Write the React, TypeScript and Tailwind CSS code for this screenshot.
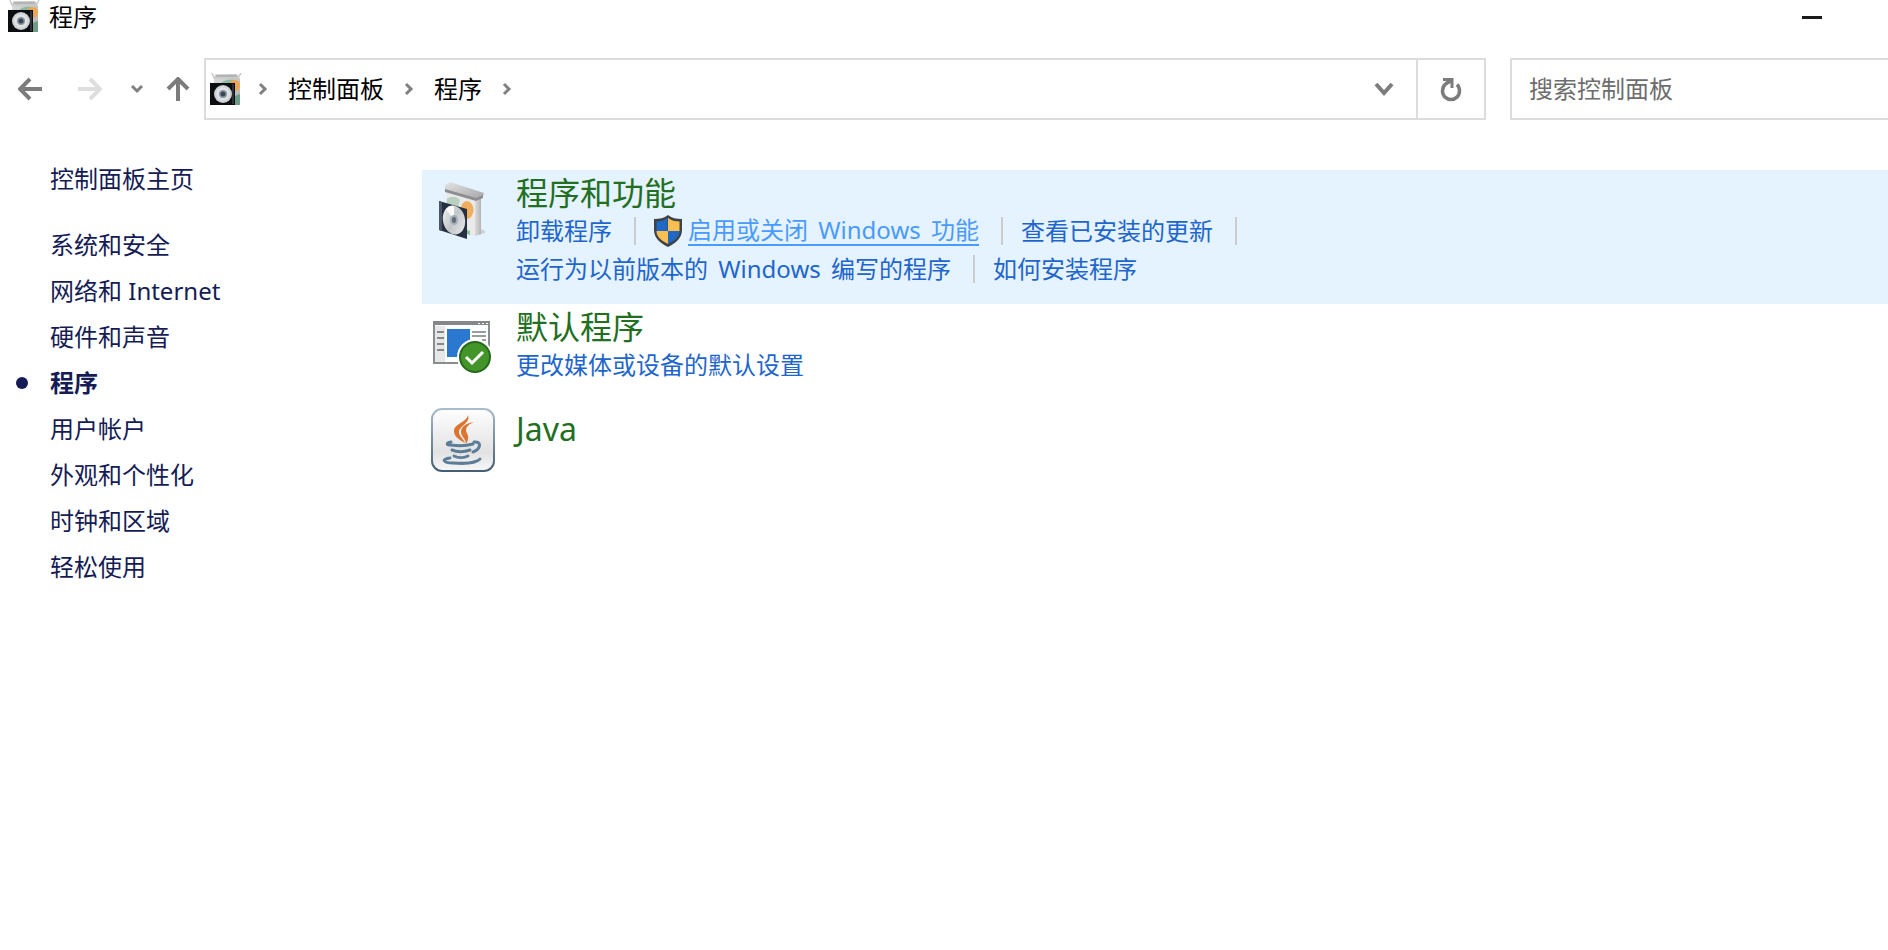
import React from "react";

type NavItem = { id: number; name: string; active?: boolean };
type TaskLink = { id: string; name: React.ReactNode; shield?: boolean; hovered?: boolean; divider?: boolean };
type Category = {
  id: number;
  title: string;
  icon: React.ReactNode;
  iconClass: string;
  rows: TaskLink[][];
  className: string;
};

function BoxIcon() {
  return (
    <svg viewBox="0 0 32 32" className="w-8 h-8 shrink-0" aria-hidden="true">
      <defs>
        <linearGradient id="boxFace" x1="0" y1="0" x2="1" y2="1">
          <stop offset="0" stopColor="#dcdcdc" />
          <stop offset="1" stopColor="#aeb2b2" />
        </linearGradient>
        <radialGradient id="disc">
          <stop offset="0" stopColor="#aeb6be" />
          <stop offset="0.6" stopColor="#e4e6e8" />
          <stop offset="1" stopColor="#c2c6ca" />
        </radialGradient>
      </defs>
      <path d="M5 1h22l3 5v26H4V6z" fill="url(#boxFace)" />
      <path d="M2 0l2 5h24l3-5" fill="none" stroke="#c9c9c9" strokeWidth="1.5" />
      <path d="M6 2h20l1 2H5z" fill="#b3b3b3" />
      <path d="M10 11c3-4 9-5 14-4l-2 4z" fill="#8fb8a0" />
      <circle cx="24.500" cy="12.500" r="5.500" fill="#eea750" />
      <path d="M25 23l5-2v11h-5z" fill="#6f9c85" />
      <path d="M0 10h25v22H0z" fill="#0c0d10" />
      <path d="M22 11h2v20h-2z" fill="#2d3036" />
      <circle cx="13" cy="21" r="9" fill="url(#disc)" />
      <circle cx="13" cy="21" r="4" fill="#8e99a5" />
      <circle cx="13" cy="21" r="2.500" fill="#3b4654" />
    </svg>
  );
}

function ProgramsIcon() {
  return (
    <svg viewBox="0 0 48 58" className="w-12 h-[58px]" aria-hidden="true">
      <defs>
        <linearGradient id="side" x1="0" y1="0" x2="1" y2="0">
          <stop offset="0" stopColor="#dcdcdc" />
          <stop offset="1" stopColor="#b4b4b4" />
        </linearGradient>
        <linearGradient id="lid" x1="0" y1="0" x2="1" y2="1">
          <stop offset="0" stopColor="#e4e4e4" />
          <stop offset="1" stopColor="#a5a5a8" />
        </linearGradient>
        <linearGradient id="cd" x1="0" y1="0" x2="1" y2="1">
          <stop offset="0" stopColor="#f2f3f3" />
          <stop offset="0.5" stopColor="#c3c7ca" />
          <stop offset="1" stopColor="#eceded" />
        </linearGradient>
      </defs>
      <path d="M34 54l9-2 4-2-4-3z" fill="#c9d3dc" />
      <path d="M7 9l29 8v37L7 46z" fill="#e9eaea" />
      <path d="M36 17l6-2v37l-6 2z" fill="url(#side)" />
      <path d="M8 17c3-3 10-3 13 1l-2 7-11-3z" fill="#b9cfc0" />
      <ellipse cx="28" cy="28" rx="6.500" ry="9" fill="#f0ae5e" />
      <path d="M28 48l3 1v4l-3-1z" fill="#8fc09c" />
      <path d="M6 3l5-3 34 11-1 3-7 3L6 8z" fill="url(#lid)" />
      <path d="M6 7l31 9 7-3v3l-7 3L6 10z" fill="#8e8e92" />
      <path d="M0 19l28 8v30L0 48z" fill="#26303e" />
      <path d="M0 19l3 1v29l-3-1z" fill="#49566a" />
      <ellipse cx="15" cy="38" rx="11" ry="14.500" transform="rotate(-12 15 38)" fill="url(#cd)" />
      <path d="M15 38L7 27c2-3 5-4 8-3z" fill="#fafafa" />
      <ellipse cx="15" cy="38" rx="4" ry="5" fill="#a4adb6" />
      <ellipse cx="15" cy="38" rx="2" ry="3" fill="#5e6b79" />
    </svg>
  );
}

function DefaultsIcon() {
  return (
    <svg viewBox="0 0 60 54" className="w-[60px] h-[54px]" aria-hidden="true">
      <path d="M1 1h55v41H1z" fill="#fff" stroke="#8a8d90" strokeWidth="2" />
      <path d="M0 0h57v4H0z" fill="#85888b" />
      <path d="M45 2h2v1h-2zM49 2h2v1h-2zM53 2h2v1h-2z" fill="#fff" />
      <path d="M2 5h10v36H2z" fill="#e7e7e7" />
      <path d="M4 11h7M4 17h7M4 23h7M4 29h7" stroke="#85888b" strokeWidth="2" />
      <path d="M14 8h23v28H14z" fill="#2b78d0" />
      <path d="M39 11h14M39 15h14M49 19h4" stroke="#9a9da0" strokeWidth="2" />
      <circle cx="42" cy="36" r="18" fill="#fff" />
      <circle cx="42" cy="36" r="15" fill="#43952a" stroke="#256a1c" strokeWidth="2" />
      <path d="M33 36l6 6 11-11" fill="none" stroke="#fff" strokeWidth="3" />
    </svg>
  );
}

function JavaIcon() {
  return (
    <svg viewBox="0 0 64 64" className="w-16 h-16" aria-hidden="true">
      <defs>
        <linearGradient id="tile" x1="0" y1="0" x2="0" y2="1">
          <stop offset="0" stopColor="#fefefe" />
          <stop offset="0.7" stopColor="#e2e2e2" />
          <stop offset="1" stopColor="#f7f7f7" />
        </linearGradient>
        <linearGradient id="tileEdge" x1="0" y1="0" x2="0" y2="1">
          <stop offset="0" stopColor="#a9bccb" />
          <stop offset="1" stopColor="#455f74" />
        </linearGradient>
      </defs>
      <rect x="1" y="1" width="62" height="62" rx="10" fill="url(#tile)" stroke="url(#tileEdge)" strokeWidth="2" />
      <path d="M37 7c3 8-9 11-9 17 0 4 4 6 6 11-7-4-11-7-11-12 0-7 13-9 14-16z" fill="#dc7430" />
      <path d="M43 14c-5 2-8 5-8 8 0 4 5 6 0 14 0-5-5-8-5-12 0-6 6-9 13-10z" fill="#dc7430" />
      <g fill="none" stroke="#5b7d98" strokeWidth="3" strokeLinecap="round">
        <path d="M20 34c-5 1-5 3 0 3 7 1 15 1 22-1" />
        <path d="M43 34c8-1 7 7-1 10" />
        <path d="M21 42c5 2 12 2 18 0" />
        <path d="M23 48c4 2 10 2 14 0" />
        <path d="M19 50c-9 1-7 5 3 5 11 1 23 0 27-4" />
      </g>
    </svg>
  );
}

function ShieldIcon() {
  return (
    <svg viewBox="0 0 28 32" className="w-7 h-8 mr-1.5 shrink-0" aria-hidden="true">
      <path d="M14 0c4 3 8 4 14 4v11c0 8-6 13-14 17C6 28 0 23 0 15V4c6 0 10-1 14-4z" fill="#3f4347" />
      <path d="M13.500 3v13H2.500V6.500c4 0 8-1 11-3.500z" fill="#1f68c6" />
      <path d="M14 3c3 2.500 7 3.500 11.500 3.500V16H14z" fill="#fbbf51" />
      <path d="M2.500 16H14v13C8 26 2.500 22 2.500 16z" fill="#fbbf51" />
      <path d="M14 16h11.500c0 6-5.500 10-11.500 13z" fill="#1f68c6" />
    </svg>
  );
}

function Chevron() {
  return (
    <svg viewBox="0 0 10 14" className="w-2.5 h-3.5 shrink-0" aria-hidden="true">
      <path d="M2 2l5 5-5 5" fill="none" stroke="#808080" strokeWidth="3" />
    </svg>
  );
}

const navItems: NavItem[] = [
  { id: 1, name: "系统和安全" },
  { id: 2, name: "网络和 Internet" },
  { id: 3, name: "硬件和声音" },
  { id: 4, name: "程序", active: true },
  { id: 5, name: "用户帐户" },
  { id: 6, name: "外观和个性化" },
  { id: 7, name: "时钟和区域" },
  { id: 8, name: "轻松使用" },
];

// Latin words get a little air between the Chinese characters
const windows = <span className="mx-1">Windows</span>;

const categories: Category[] = [
  {
    id: 1,
    title: "程序和功能",
    icon: <ProgramsIcon />,
    iconClass: "pt-3",
    className: "bg-[#e5f2ff] pb-4",
    rows: [
      [
        { id: "uninstall", name: "卸载程序", divider: true },
        { id: "features", name: <>启用或关闭 {windows} 功能</>, shield: true, hovered: true, divider: true },
        { id: "updates", name: "查看已安装的更新", divider: true },
      ],
      [
        { id: "compat", name: <>运行为以前版本的 {windows} 编写的程序</>, divider: true },
        { id: "install", name: "如何安装程序" },
      ],
    ],
  },
  {
    id: 2,
    title: "默认程序",
    icon: <DefaultsIcon />,
    iconClass: "pt-[17px]",
    className: "pb-[22px]",
    rows: [[{ id: "media", name: "更改媒体或设备的默认设置" }]],
  },
  { id: 3, title: "Java", icon: <JavaIcon />, iconClass: "pt-0.5", className: "pb-4", rows: [] },
];

function TitleBar() {
  return (
    <header className="flex h-[34px] items-start pl-2">
      <BoxIcon />
      <h1 className="ml-[9px] flex-1 leading-[34px] text-black">程序</h1>
      <button type="button" aria-label="最小化" className="mr-[66px] h-[34px]">
        <span className="block h-[3px] w-5 bg-[#1a1a1a]" />
      </button>
    </header>
  );
}

function AddressRow() {
  return (
    <div className="mt-6 flex h-[62px] items-stretch">
      {/* History buttons */}
      <nav className="flex w-[204px] shrink-0 items-center pl-[18px]">
        <button type="button" aria-label="后退">
          <svg viewBox="0 0 24 24" className="w-6 h-6">
            <path d="M24 12H2M12 2L2 12l10 10" fill="none" stroke="#7c7c7c" strokeWidth="4" />
          </svg>
        </button>
        <button type="button" aria-label="前进" className="ml-9">
          <svg viewBox="0 0 24 24" className="w-6 h-6">
            <path d="M0 12h22M12 2l10 10-10 10" fill="none" stroke="#dedede" strokeWidth="4" />
          </svg>
        </button>
        <button type="button" aria-label="最近浏览的位置" className="ml-7">
          <svg viewBox="0 0 14 10" className="w-3.5 h-2.5">
            <path d="M2 2l5 5 5-5" fill="none" stroke="#808080" strokeWidth="3" />
          </svg>
        </button>
        <button type="button" aria-label="上移" className="ml-[22px]">
          <svg viewBox="0 0 24 24" className="w-6 h-6">
            <path d="M12 24V2M2 12L12 2l10 10" fill="none" stroke="#7c7c7c" strokeWidth="4" />
          </svg>
        </button>
      </nav>

      {/* Address bar */}
      <div className="flex flex-1 border-2 border-[#dcdcdc]">
        <div className="flex flex-1 items-center pl-1">
          <BoxIcon />
          <div className="ml-4 flex items-center">
            <Chevron />
            <a href="#panel" className="mx-5 leading-8 text-black">控制面板</a>
            <Chevron />
            <a href="#programs" className="mx-5 leading-8 text-black">程序</a>
            <Chevron />
          </div>
        </div>
        <button type="button" aria-label="以前的位置" className="w-16">
          <svg viewBox="0 0 20 14" className="mx-auto w-5 h-3.5">
            <path d="M2 2l8 9 8-9" fill="none" stroke="#7c7c7c" strokeWidth="4" />
          </svg>
        </button>
        <button type="button" aria-label="刷新" className="w-[68px] border-l-2 border-[#dcdcdc]">
          <svg viewBox="0 0 22 26" className="mx-auto w-[22px] h-[26px]">
            <path d="M11 5C5 7 2.500 10 2.500 15c0 5 4 8.500 8.500 8.500s8.500-3.500 8.500-8.500c0-3-1-5-2.500-6.500" fill="none" stroke="#7c7c7c" strokeWidth="3.500" />
            <path d="M3 3.500h9v8.500" fill="none" stroke="#7c7c7c" strokeWidth="3" />
          </svg>
        </button>
      </div>

      {/* Search box */}
      <input
        type="search"
        aria-label="搜索控制面板"
        placeholder="搜索控制面板"
        className="ml-6 w-[378px] appearance-none rounded-none border-2 border-r-0 border-[#dcdcdc] bg-white pl-[17px] placeholder-[#6d6d6d] outline-none"
      />
    </div>
  );
}

function Sidebar() {
  return (
    <aside className="w-[422px] shrink-0 pt-9 pl-4 leading-[46px] text-[#151c55]">
      <a href="#home" className="ml-[34px] block">控制面板主页</a>
      <ul className="mt-5">
        {navItems.map((item) => (
          <li key={item.id} className="flex items-center">
            <span className="w-[34px]">
              {item.active && <span className="block h-3 w-3 rounded-full bg-[#151c55]" />}
            </span>
            <a href={`#nav-${item.id}`} className={item.active ? "font-bold" : ""}>
              {item.name}
            </a>
          </li>
        ))}
      </ul>
    </aside>
  );
}

function CategorySection({ category }: { category: Category }) {
  return (
    <section className={`flex ${category.className}`}>
      <div className={`flex w-[94px] shrink-0 justify-center pr-3 ${category.iconClass}`}>
        {category.icon}
      </div>
      <div className="pt-1">
        <h2 className="text-[32px] leading-[38px] text-[#226f22]">
          <a href={`#category-${category.id}`}>{category.title}</a>
        </h2>
        {category.rows.map((row, i) => (
          <div key={i} className="flex h-[38px] items-center">
            {row.map((link) => (
              <React.Fragment key={link.id}>
                {link.shield && <ShieldIcon />}
                <a
                  href={`#${link.id}`}
                  className={
                    link.hovered
                      ? "border-b-2 border-[#4a9bff] leading-7 text-[#4a9bff]"
                      : "leading-7 text-[#1f66cc]"
                  }
                >
                  {link.name}
                </a>
                {link.divider && <span className="ml-[22px] mr-[18px] h-7 w-0.5 bg-[#cccccc]" />}
              </React.Fragment>
            ))}
          </div>
        ))}
      </div>
    </section>
  );
}

export default function App() {
  return (
    <div
      lang="zh-CN"
      className="min-h-screen bg-white font-['Noto_Sans','Noto_Sans_CJK_SC',sans-serif] text-2xl"
    >
      <TitleBar />
      <AddressRow />
      <div className="flex">
        <Sidebar />
        <main className="flex-1 pt-[50px]">
          {categories.map((category) => (
            <CategorySection key={category.id} category={category} />
          ))}
        </main>
      </div>
    </div>
  );
}
